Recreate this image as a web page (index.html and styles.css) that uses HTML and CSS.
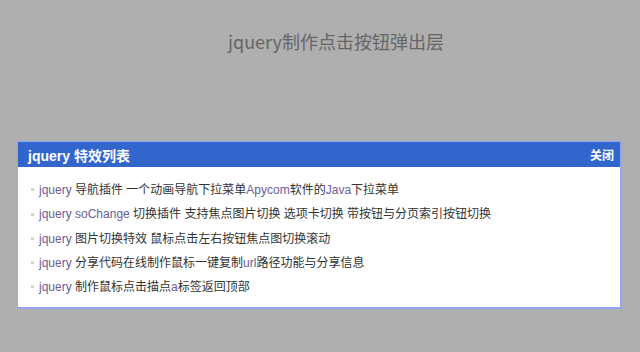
FILE: index.html
```html
<!DOCTYPE html>
<html lang="zh-CN">
<head>
<meta charset="utf-8">
<title>jquery制作点击按钮弹出层</title>
<link rel="stylesheet" href="styles.css">
</head>
<body>
<h1 class="page-title">jquery制作点击按钮弹出层</h1>
<div class="dialog">
  <div class="dialog-head">
    <span class="dialog-title">jquery 特效列表</span>
    <span class="dialog-close">关闭</span>
  </div>
  <ul class="dialog-list">
    <li><span class="lk">jquery</span> 导航插件 一个动画导航下拉菜单<span class="lk">Apycom</span>软件的<span class="lk">Java</span>下拉菜单</li>
    <li><span class="lk">jquery</span> <span class="lk">soChange</span> 切换插件 支持焦点图片切换 选项卡切换 带按钮与分页索引按钮切换</li>
    <li><span class="lk">jquery</span> 图片切换特效 鼠标点击左右按钮焦点图切换滚动</li>
    <li><span class="lk">jquery</span> 分享代码在线制作鼠标一键复制<span class="lk">url</span>路径功能与分享信息</li>
    <li><span class="lk">jquery</span> 制作鼠标点击描点<span class="lk">a</span>标签返回顶部</li>
  </ul>
</div>
</body>
</html>
```

FILE: styles.css
```css
html, body {
  margin: 0;
  padding: 0;
}
body {
  width: 640px;
  height: 352px;
  background: #afafaf;
  font-family: "Liberation Sans", "Noto Sans CJK SC", sans-serif;
  overflow: hidden;
}
.page-title {
  margin: 0;
  padding: 30px 0 0 32px;
  height: 110px;
  box-sizing: border-box;
  text-align: center;
  font-family: "Noto Sans CJK SC", sans-serif;
  font-weight: normal;
  font-size: 18px;
  line-height: 22px;
  color: #666666;
}
.dialog {
  margin: 31px 0 0 17px;
  width: 602px;
  background: #ffffff;
  border: 1px solid #93a2f2;
  border-right-width: 2px;
  border-bottom-width: 2px;
}
.dialog-head {
  display: flex;
  justify-content: space-between;
  align-items: center;
  height: 25px;
  padding: 0 6px 0 10px;
  background: #3366cc;
  color: #ffffff;
  font-weight: bold;
}
.dialog-title {
  font-size: 14px;
}
.dialog-close {
  font-size: 12px;
}
.dialog-list {
  list-style: none;
  margin: 0;
  padding: 11px 0 8px 13px;
}
.dialog-list li {
  height: 24.25px;
  line-height: 24.25px;
  font-size: 12px;
  color: #333333;
  white-space: nowrap;
}
.dialog-list li::before {
  content: "";
  display: inline-block;
  vertical-align: middle;
  width: 3px;
  height: 3px;
  background: #d4d4d4;
  margin: -2px 5px 0 0;
}
.lk {
  color: #6a5c98;
}
```
